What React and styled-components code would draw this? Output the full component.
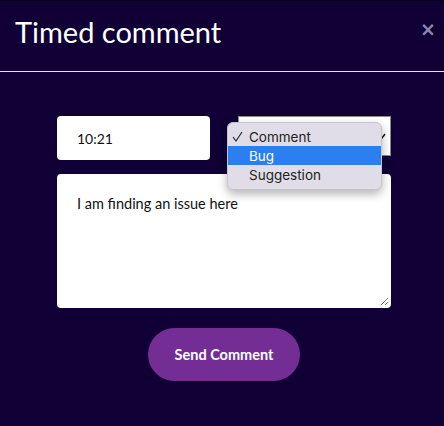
import React from 'react'
import styled, { createGlobalStyle } from 'styled-components'

const GlobalStyle = createGlobalStyle`
  html, body {
    margin: 0;
    padding: 0;
    background: #100035;
  }
  body {
    font-family: Lato, "Open Sans", sans-serif;
  }
`

const Modal = styled.div`
  width: 444px;
  height: 426px;
  background: #100035;
  border-top: 1px solid #08001c;
  box-sizing: border-box;
  overflow: hidden;
`

const Header = styled.div`
  display: flex;
  align-items: center;
  justify-content: space-between;
  height: 70px;
  padding: 0 8px 0 15px;
  border-bottom: 1px solid #e6e2f6;
`

const Title = styled.h1`
  margin: 0 0 10px;
  font-size: 29px;
  font-weight: 400;
  color: #ffffff;
`

const Close = styled.span`
  font-family: "DejaVu Sans", sans-serif;
  font-size: 19px;
  font-weight: bold;
  color: #8c86ad;
  margin-bottom: 14px;
`

const Form = styled.div`
  display: flex;
  flex-direction: column;
  align-items: center;
  padding-top: 44px;
  padding-left: 4px;
`

const Row = styled.div`
  display: flex;
  gap: 28px;
  width: 334px;
  position: relative;
  z-index: 2;
`

const TimeInput = styled.div`
  width: 153px;
  height: 44px;
  box-sizing: border-box;
  background: #fff;
  border-radius: 4px;
  padding: 0 20px;
  display: flex;
  align-items: center;
  font-size: 14px;
  color: #111;
`

const SelectWrap = styled.div`
  position: relative;
  width: 153px;
`

const SelectBox = styled.div`
  height: 40px;
  box-sizing: border-box;
  background: #fff;
  border: 1px solid #8a8a8a;
  display: flex;
  align-items: center;
  justify-content: flex-end;
  padding-right: 4px;
`

const Menu = styled.div`
  position: absolute;
  left: -11px;
  top: 6px;
  z-index: 5;
  width: 155px;
  padding: 4px 0 5px;
  box-sizing: border-box;
  background: #e1dde8;
  border: 1px solid #c9c4d2;
  border-radius: 6px;
  box-shadow: 0 4px 10px rgba(0, 0, 0, 0.3);
  font-family: Inter, "Liberation Sans", sans-serif;
  font-size: 13.5px;
`

const Option = styled.div`
  display: flex;
  align-items: center;
  height: 19px;
  padding-left: 21px;
  position: relative;
  color: ${(props) => (props.active ? '#ffffff' : '#222')};
  background: ${(props) => (props.active ? '#2c7ff0' : 'transparent')};
`

const Check = styled.svg`
  position: absolute;
  left: 4px;
  top: 4px;
`

const TextArea = styled.div`
  position: relative;
  z-index: 1;
  width: 334px;
  height: 134px;
  margin-top: 14px;
  box-sizing: border-box;
  background: #fff;
  border-radius: 4px;
  padding: 21px 20px;
  font-size: 14.5px;
  color: #111;
`

const Grip = styled.svg`
  position: absolute;
  right: 2px;
  bottom: 2px;
`

const Button = styled.button`
  margin-top: 20px;
  width: 152px;
  height: 53px;
  border: none;
  border-radius: 27px;
  background: #752d96;
  color: #fff;
  font-family: Lato, sans-serif;
  font-size: 14.5px;
  font-weight: 700;
`

function App() {
  return (
    <Modal>
      <GlobalStyle />
      <Header>
        <Title>Timed comment</Title>
        <Close>×</Close>
      </Header>
      <Form>
        <Row>
          <TimeInput>10:21</TimeInput>
          <SelectWrap>
            <SelectBox>
              <svg width="8" height="8" viewBox="0 0 8 8">
                <path d="M1 3 L4 6 L7 2" stroke="#111" strokeWidth="1.4" fill="none" />
              </svg>
            </SelectBox>
            <Menu>
              <Option>
                <Check width="11" height="11" viewBox="0 0 11 11">
                  <path d="M1 6 L4 10 L10 1" stroke="#222" strokeWidth="1.1" fill="none" />
                </Check>
                Comment
              </Option>
              <Option active>Bug</Option>
              <Option>Suggestion</Option>
            </Menu>
          </SelectWrap>
        </Row>
        <TextArea>
          I am finding an issue here
          <Grip width="10" height="10" viewBox="0 0 10 10">
            <path d="M9 2 L2 9 M9 6 L6 9" stroke="#777" strokeWidth="1" />
          </Grip>
        </TextArea>
        <Button>Send Comment</Button>
      </Form>
    </Modal>
  )
}

export default App
